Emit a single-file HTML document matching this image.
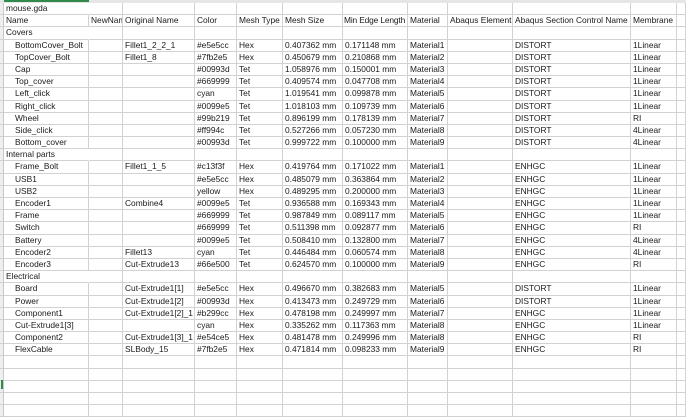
<!DOCTYPE html>
<html><head><style>
body{margin:0;width:686px;height:409px;overflow:hidden;background:#fff;font-family:"Liberation Sans",Arial,sans-serif;font-size:8.4px;color:#1a1a1a;position:relative}
.top{position:absolute;left:0;top:0;width:686px;height:3px;background:#e6e6e6}
.top i{position:absolute;left:4px;top:0;width:85px;height:2px;background:#2f8a4c}
.g{position:absolute;left:0;top:3px;display:grid;grid-template-columns:4px 85px 34px 72px 42px 46px 60px 65px 40px 65px 118px 46px 9px;grid-auto-rows:12.2px}
.g div{border-right:1px solid #d2d2d2;border-bottom:1px solid #d2d2d2;white-space:nowrap;overflow:hidden;padding-left:2px;line-height:11.2px;box-sizing:border-box}
.g div.s{background:#efefef;padding:0;border-right:1px solid #c8c8c8}
.g div.in{padding-left:11px}
.g div.n{padding-left:1px;letter-spacing:-0.15px}
.mk{position:absolute;left:1px;top:380px;width:2px;height:9px;background:#2f8a4c}
</style></head><body>
<div class="top"><i></i></div>
<div class="g" id="g"></div>
<div class="mk"></div>
<script>
const rows=[
["mouse.gda"],
["Name","NewName","Original Name","Color","Mesh Type","Mesh Size","Min Edge Length","Material","Abaqus Element","Abaqus Section Control Name","Membrane"],
["Covers"],
["*BottomCover_Bolt","","Fillet1_2_2_1","#e5e5cc","Hex","0.407362 mm","0.171148 mm","Material1","","DISTORT","1Linear"],
["*TopCover_Bolt","","Fillet1_8","#7fb2e5","Hex","0.450679 mm","0.210868 mm","Material2","","DISTORT","1Linear"],
["*Cap","","","#00993d","Tet","1.058976 mm","0.150001 mm","Material3","","DISTORT","1Linear"],
["*Top_cover","","","#669999","Tet","0.409574 mm","0.047708 mm","Material4","","DISTORT","1Linear"],
["*Left_click","","","cyan","Tet","1.019541 mm","0.099878 mm","Material5","","DISTORT","1Linear"],
["*Right_click","","","#0099e5","Tet","1.018103 mm","0.109739 mm","Material6","","DISTORT","1Linear"],
["*Wheel","","","#99b219","Tet","0.896199 mm","0.178139 mm","Material7","","DISTORT","RI"],
["*Side_click","","","#ff994c","Tet","0.527266 mm","0.057230 mm","Material8","","DISTORT","4Linear"],
["*Bottom_cover","","","#00993d","Tet","0.999722 mm","0.100000 mm","Material9","","DISTORT","4Linear"],
["Internal parts"],
["*Frame_Bolt","","Fillet1_1_5","#c13f3f","Hex","0.419764 mm","0.171022 mm","Material1","","ENHGC","1Linear"],
["*USB1","","","#e5e5cc","Hex","0.485079 mm","0.363864 mm","Material2","","ENHGC","1Linear"],
["*USB2","","","yellow","Hex","0.489295 mm","0.200000 mm","Material3","","ENHGC","1Linear"],
["*Encoder1","","Combine4","#0099e5","Tet","0.936588 mm","0.169343 mm","Material4","","ENHGC","1Linear"],
["*Frame","","","#669999","Tet","0.987849 mm","0.089117 mm","Material5","","ENHGC","1Linear"],
["*Switch","","","#669999","Tet","0.511398 mm","0.092877 mm","Material6","","ENHGC","RI"],
["*Battery","","","#0099e5","Tet","0.508410 mm","0.132800 mm","Material7","","ENHGC","4Linear"],
["*Encoder2","","Fillet13","cyan","Tet","0.446484 mm","0.060574 mm","Material8","","ENHGC","4Linear"],
["*Encoder3","","Cut-Extrude13","#66e500","Tet","0.624570 mm","0.100000 mm","Material9","","ENHGC","RI"],
["Electrical"],
["*Board","","Cut-Extrude1[1]","#e5e5cc","Hex","0.496670 mm","0.382683 mm","Material5","","DISTORT","1Linear"],
["*Power","","Cut-Extrude1[2]","#00993d","Hex","0.413473 mm","0.249729 mm","Material6","","DISTORT","1Linear"],
["*Component1","","Cut-Extrude1[2]_1","#b299cc","Hex","0.478198 mm","0.249997 mm","Material7","","ENHGC","1Linear"],
["*Cut-Extrude1[3]","","","cyan","Hex","0.335262 mm","0.117363 mm","Material8","","ENHGC","1Linear"],
["*Component2","","Cut-Extrude1[3]_1","#e54ce5","Hex","0.481478 mm","0.249996 mm","Material8","","ENHGC","RI"],
["*FlexCable","","SLBody_15","#7fb2e5","Hex","0.471814 mm","0.098233 mm","Material9","","ENHGC","RI"]
];
let h="";
for(let r=0;r<34;r++){
 const row=rows[r]||[];
 h+='<div class="s"></div>';
 for(let c=0;c<12;c++){
  let t=row[c]||"",cl="";
  if(c==0&&t[0]=="*"){t=t.slice(1);cl=' class="in"';}
  else if(r==1&&c==6){cl=' class="n"';}
  if(c==0&&row.length==1&&t){h+='<div style="overflow:visible;border-right-color:transparent">'+t+'</div>';continue;}
  h+='<div'+cl+'>'+t+'</div>';
 }
}
document.getElementById("g").innerHTML=h;
</script>
</body></html>
